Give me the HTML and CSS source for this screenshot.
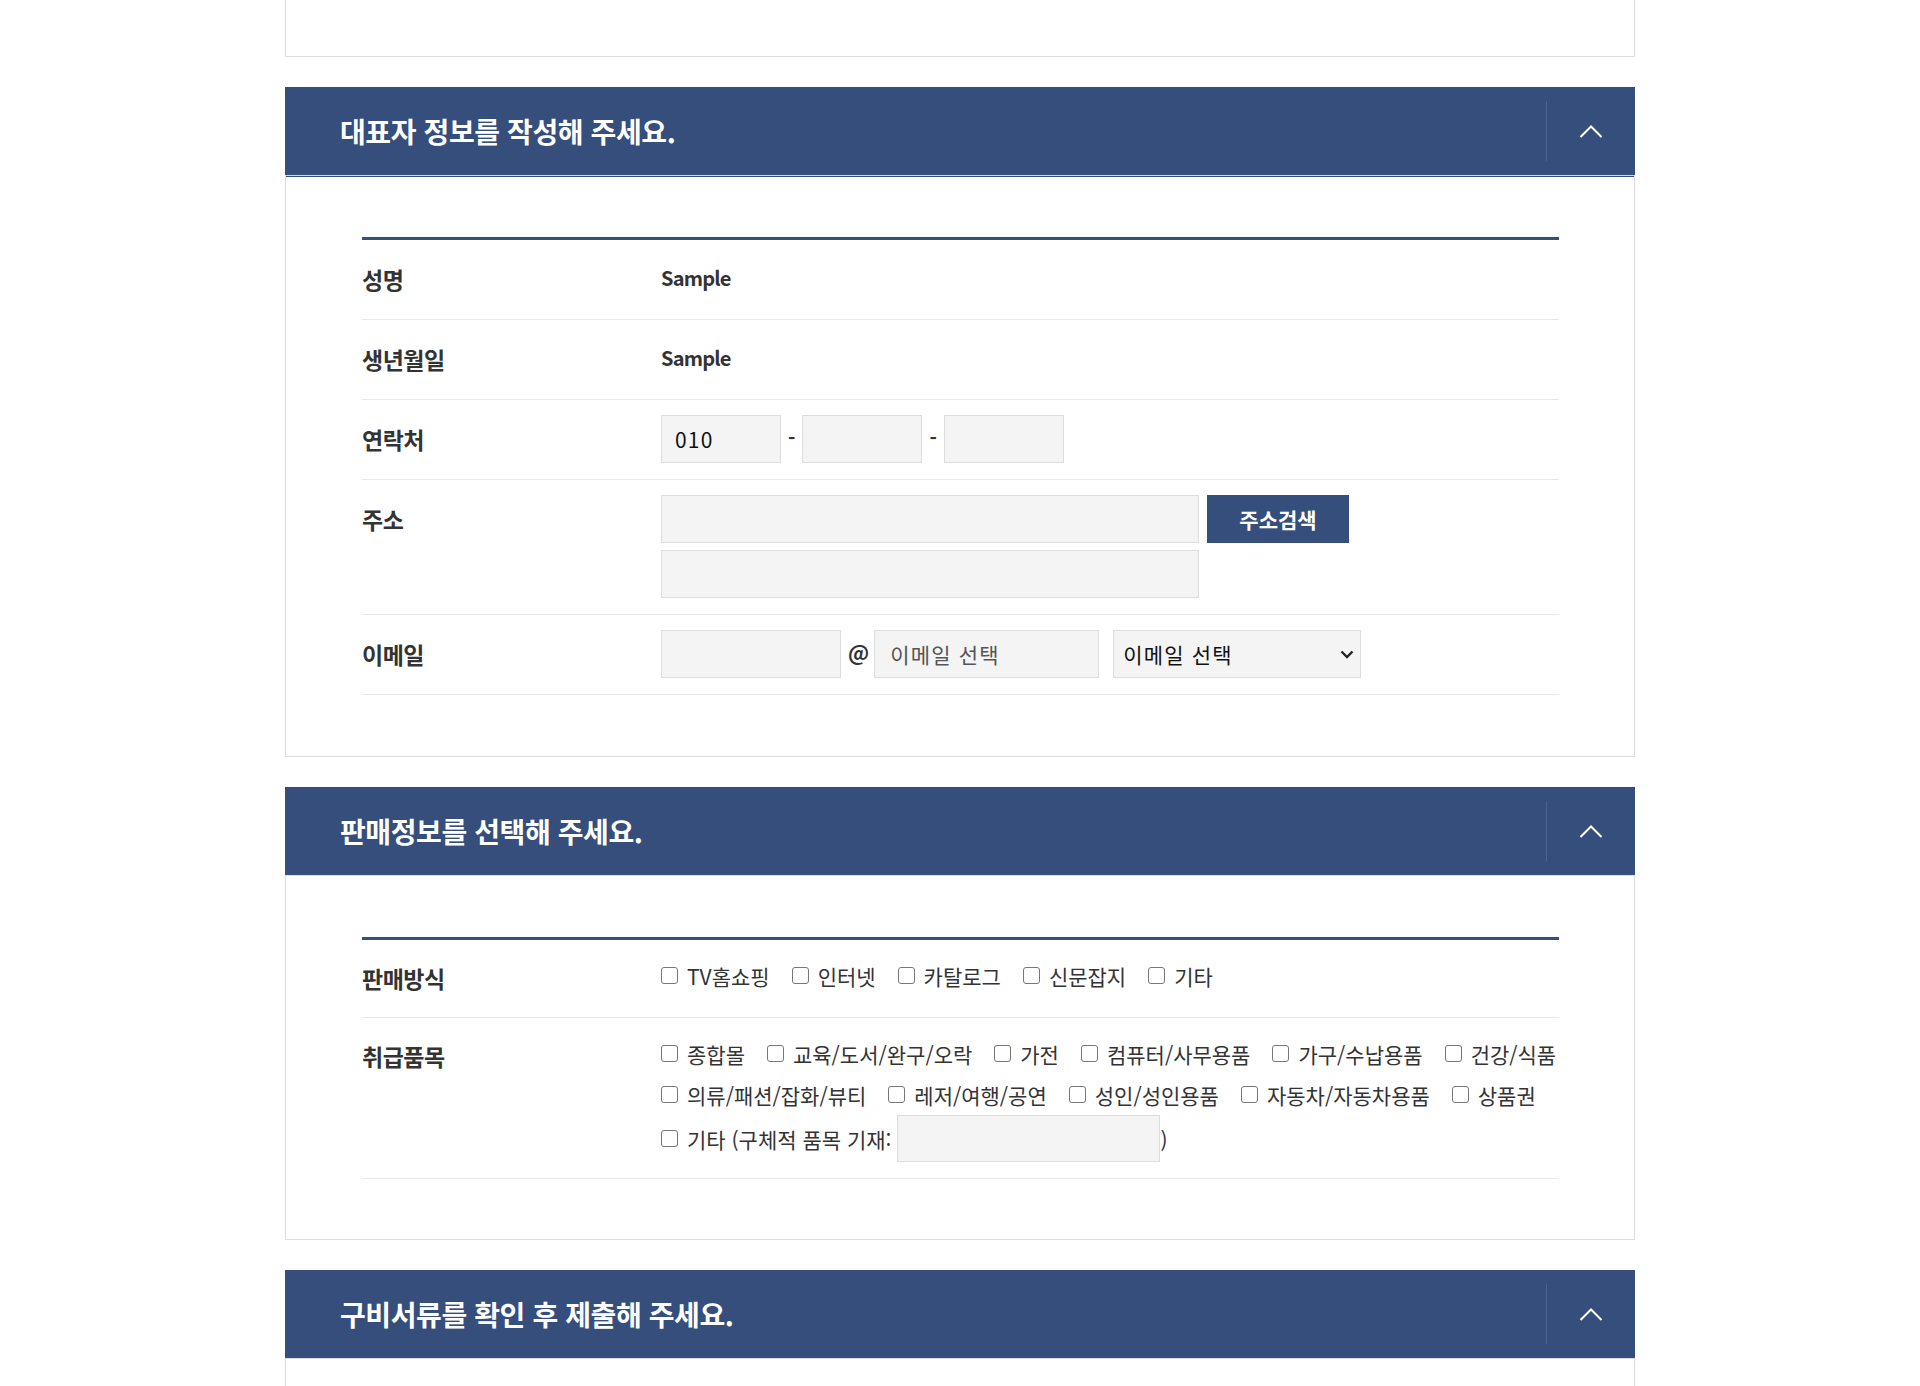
FILE: index.html
```html
<!DOCTYPE html>
<html lang="ko">
<head>
<meta charset="utf-8">
<title>신청서 작성</title>
<link rel="stylesheet" href="styles.css">
</head>
<body>
<div class="page">
  <div class="prev-body"></div>

  <section class="panel">
    <div class="panel-head">
      <h2 class="panel-title">대표자 정보를 작성해 주세요.</h2>
      <button class="toggle" type="button" aria-label="접기">
        <svg width="24" height="15" viewBox="0 0 24 15"><polyline points="1.5,13 12,2.5 22.5,13" fill="none" stroke="#fff" stroke-width="2"/></svg>
      </button>
    </div>
    <div class="panel-body first">
      <div class="form-table">
        <div class="row">
          <div class="label">성명</div>
          <div class="value-text">Sample</div>
        </div>
        <div class="row">
          <div class="label">생년월일</div>
          <div class="value-text">Sample</div>
        </div>
        <div class="row">
          <div class="label">연락처</div>
          <div class="inline">
            <input class="input w-phone" type="text" value="010">
            <span class="dash">-</span>
            <input class="input w-phone" type="text">
            <span class="dash">-</span>
            <input class="input w-phone" type="text">
          </div>
        </div>
        <div class="row">
          <div class="label">주소</div>
          <div>
            <div class="inline">
              <input class="input w-addr" type="text">
              <button class="btn" type="button">주소검색</button>
            </div>
            <div class="inline addr-line2">
              <input class="input w-addr" type="text">
            </div>
          </div>
        </div>
        <div class="row">
          <div class="label">이메일</div>
          <div class="inline">
            <input class="input w-email1" type="text">
            <span class="at">@</span>
            <input class="input w-email2" type="text" value="이메일 선택">
            <span class="select-wrap">
              <select class="select">
                <option>이메일 선택</option>
                <option>naver.com</option>
                <option>gmail.com</option>
              </select>
              <svg class="select-arrow" width="14" height="9" viewBox="0 0 14 9"><polyline points="1.5,1.5 7,7 12.5,1.5" fill="none" stroke="#222" stroke-width="2.4"/></svg>
            </span>
          </div>
        </div>
      </div>
    </div>
  </section>

  <section class="panel">
    <div class="panel-head">
      <h2 class="panel-title">판매정보를 선택해 주세요.</h2>
      <button class="toggle" type="button" aria-label="접기">
        <svg width="24" height="15" viewBox="0 0 24 15"><polyline points="1.5,13 12,2.5 22.5,13" fill="none" stroke="#fff" stroke-width="2"/></svg>
      </button>
    </div>
    <div class="panel-body second">
      <div class="form-table">
        <div class="row check-row">
          <div class="label">판매방식</div>
          <div>
            <div class="checks-line">
              <label class="check"><input type="checkbox">TV홈쇼핑</label>
              <label class="check"><input type="checkbox">인터넷</label>
              <label class="check"><input type="checkbox">카탈로그</label>
              <label class="check"><input type="checkbox">신문잡지</label>
              <label class="check"><input type="checkbox">기타</label>
            </div>
          </div>
        </div>
        <div class="row check-row">
          <div class="label">취급품목</div>
          <div>
            <div class="checks-line">
              <label class="check"><input type="checkbox">종합몰</label>
              <label class="check"><input type="checkbox">교육/도서/완구/오락</label>
              <label class="check"><input type="checkbox">가전</label>
              <label class="check"><input type="checkbox">컴퓨터/사무용품</label>
              <label class="check"><input type="checkbox">가구/수납용품</label>
              <label class="check"><input type="checkbox">건강/식품</label>
            </div>
            <div class="checks-line">
              <label class="check"><input type="checkbox">의류/패션/잡화/뷰티</label>
              <label class="check"><input type="checkbox">레저/여행/공연</label>
              <label class="check"><input type="checkbox">성인/성인용품</label>
              <label class="check"><input type="checkbox">자동차/자동차용품</label>
              <label class="check"><input type="checkbox">상품권</label>
            </div>
            <div class="checks-line last">
              <label class="check tight"><input type="checkbox">기타 (구체적 품목 기재:</label>
              <input class="input w-etc" type="text">
              <span class="paren">)</span>
            </div>
          </div>
        </div>
      </div>
    </div>
  </section>

  <section class="panel">
    <div class="panel-head">
      <h2 class="panel-title">구비서류를 확인 후 제출해 주세요.</h2>
      <button class="toggle" type="button" aria-label="접기">
        <svg width="24" height="15" viewBox="0 0 24 15"><polyline points="1.5,13 12,2.5 22.5,13" fill="none" stroke="#fff" stroke-width="2"/></svg>
      </button>
    </div>
    <div class="panel-body empty"></div>
  </section>
</div>
</body>
</html>
```

FILE: styles.css
```css
html, body {
  margin: 0;
  padding: 0;
  background: #fff;
}

body {
  font-family: "Noto Sans CJK KR", "Noto Sans", sans-serif;
  color: #333;
}

.page {
  width: 1350px;
  margin: 0 auto;
}

.prev-body {
  height: 56px;
  border: 1px solid #ddd;
  border-top: 0;
}

.panel {
  margin-top: 30px;
}

.panel-head {
  display: flex;
  align-items: center;
  height: 88px;
  background: #354e7b;
}

.panel-title {
  flex: 1;
  margin: 0;
  padding-left: 55px;
  font-size: 28px;
  font-weight: 700;
  letter-spacing: -0.4px;
  color: #fff;
}

.toggle {
  display: flex;
  align-items: center;
  justify-content: center;
  width: 89px;
  height: 60px;
  padding: 0;
  border: 0;
  border-left: 1px solid #4a6390;
  background: transparent;
}

.panel-body {
  border: 1px solid #ddd;
  padding: 61px 75px 61px 76px;
}

.panel-body.first {
  border-top-color: #d3d8e1;
  box-shadow: inset 0 1px 0 #354e7b;
}

.panel-body.second {
  padding-bottom: 60px;
}

.panel-body.empty {
  height: 200px;
}

.form-table {
  border-top: 3px solid #354e7b;
}

.row {
  display: grid;
  grid-template-columns: 299px 1fr;
  padding: 15px 0 16px;
  border-bottom: 1px solid #e9e9e9;
}

.label {
  font-size: 23px;
  font-weight: 700;
  line-height: 48px;
  letter-spacing: -0.5px;
  color: #333;
}

.value-text {
  font-size: 20px;
  font-weight: 700;
  line-height: 46px;
  letter-spacing: -0.8px;
  color: #333;
}

.inline {
  display: flex;
  align-items: center;
}

.input {
  box-sizing: border-box;
  height: 48px;
  margin: 0;
  padding: 0 13px;
  border: 1px solid #ddd;
  border-radius: 0;
  background: #f4f4f4;
  font-family: inherit;
  font-size: 21px;
  letter-spacing: 1.2px;
  color: #111;
  outline: none;
}

.w-phone { width: 120px; }
.w-addr { width: 538px; }
.w-email1 { width: 180px; }
.w-email2 {
  width: 225px;
  padding-left: 15px;
  color: #555;
}
.w-etc {
  width: 263px;
  height: 47px;
  margin-left: 6px;
}

.dash {
  margin: -4px 7px 0;
  font-size: 20px;
  font-weight: 700;
  color: #333;
}

.at {
  margin: -4px 5px 0 7px;
  font-size: 21px;
  font-weight: 700;
  color: #333;
}

.btn {
  width: 142px;
  height: 48px;
  margin-left: 8px;
  padding: 0;
  border: 0;
  background: #354e7b;
  color: #fff;
  font-family: inherit;
  font-size: 21px;
  font-weight: 700;
}

.addr-line2 {
  margin-top: 7px;
}

.select-wrap {
  position: relative;
  display: inline-flex;
  margin-left: 14px;
}

.select {
  appearance: none;
  -webkit-appearance: none;
  box-sizing: border-box;
  width: 248px;
  height: 48px;
  margin: 0;
  padding: 0 30px 0 9px;
  border: 1px solid #ddd;
  border-radius: 0;
  background-color: #f4f4f4;
  font-family: inherit;
  font-size: 21px;
  letter-spacing: 1.2px;
  color: #111;
}

.select-arrow {
  position: absolute;
  right: 7px;
  top: 20px;
  pointer-events: none;
}

.check-row .label {
  line-height: 46px;
}

.checks-line {
  display: flex;
  align-items: center;
  height: 41px;
}

.checks-line.last {
  height: 47px;
}

.check {
  display: inline-flex;
  align-items: center;
  gap: 9px;
  margin-right: 22px;
  font-size: 21px;
  color: #333;
  white-space: nowrap;
}

.check.tight {
  margin-right: 0;
}

.check input {
  appearance: none;
  -webkit-appearance: none;
  box-sizing: border-box;
  width: 17px;
  height: 17px;
  margin: 0;
  border: 1.5px solid #777;
  border-radius: 3px;
  background: #fff;
}

.paren {
  font-size: 21px;
  color: #333;
}
```
